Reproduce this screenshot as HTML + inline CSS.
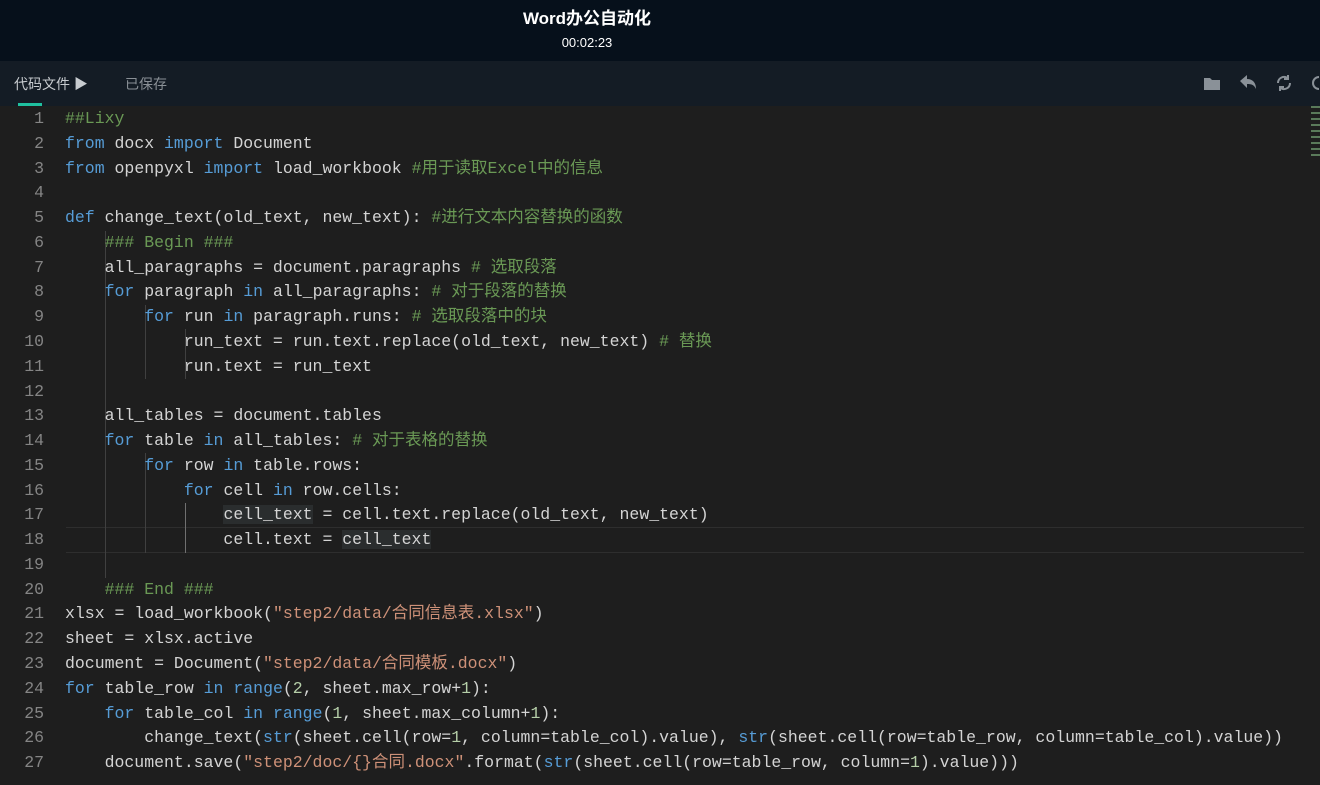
<!DOCTYPE html>
<html><head><meta charset="utf-8"><style>
*{margin:0;padding:0;box-sizing:border-box}
body{width:1320px;height:785px;overflow:hidden;background:#1e1e1e;font-family:"Liberation Sans","Noto Sans CJK SC",sans-serif}
#hdr{position:absolute;left:0;top:0;width:1320px;height:61px;background:#06101b;color:#fff;text-align:center}
#hdr .t{position:absolute;left:0;width:1174px;top:8px;font-size:17px;font-weight:bold;line-height:22px}
#hdr .tm{position:absolute;left:0;width:1174px;top:35px;font-size:13px;line-height:16px}
#tb{position:absolute;left:0;top:61px;width:1320px;height:45px;background:#141c25;font-size:14px;line-height:20px}
#tb .a{position:absolute;left:14px;top:13px;color:#c8ccd0}
#tb .b{position:absolute;left:125px;top:13px;color:#8a9096}
#tb .u{position:absolute;left:18px;top:42px;width:24px;height:3px;background:#1fc0a0}
#ed{position:absolute;left:0;top:106px;width:1320px;height:679px;background:#1e1e1e}
#lines{position:absolute;left:0;top:1px}
.ln{position:absolute;left:0;width:44px;height:24px;line-height:24px;text-align:right;color:#858585;font:16.5px/24px "Liberation Mono",monospace}
.cd{position:absolute;left:65px;height:24px;white-space:pre;color:#d4d4d4;font:16.5px/24px "Liberation Mono","Noto Sans CJK SC",monospace}
.k{color:#569cd6}.c{color:#6a9955}.s{color:#ce9178}.n{color:#b5cea8}
.g{position:absolute;width:1px;background:#404040}
.hl{background:#2a2d2e}
</style></head><body>
<div id="hdr"><div class="t">Word办公自动化</div><div class="tm">00:02:23</div></div>
<div id="tb"><span class="a">代码文件 ▶</span><span class="b">已保存</span><div class="u"></div>
<svg style="position:absolute;left:1203px;top:14px" width="18" height="16"><path d="M1 3h6l2 2h8v10H1z" fill="#8a9198"/></svg>
<svg style="position:absolute;left:1239px;top:13px" width="18" height="16"><path d="M1 7l7-6v4c6 0 9 4 9 10c-2-4-4-5-9-5v4z" fill="#8a9198"/></svg>
<svg style="position:absolute;left:1275px;top:13px" width="18" height="18" fill="none" stroke="#8a9198" stroke-width="2"><path d="M3 9a6 6 0 0 1 10-4.5M15 9a6 6 0 0 1-10 4.5"/><path d="M13 1v4h-4M5 17v-4h4"/></svg>
<svg style="position:absolute;left:1310px;top:13px" width="10" height="18" fill="none" stroke="#8a9198" stroke-width="2"><path d="M9 3a6 6 0 0 0 0 12"/></svg>
</div>
<div id="ed">
<div style="position:absolute;left:66px;top:421px;width:1238px;height:26px;border-top:1px solid #2e2e2e;border-bottom:1px solid #2e2e2e"></div>
<div class="g" style="left:105px;top:125px;height:347px"></div>
<div class="g" style="left:145px;top:199px;height:74px"></div>
<div class="g" style="left:145px;top:347px;height:100px"></div>
<div class="g" style="left:185px;top:223px;height:50px"></div>
<div class="g" style="left:185px;top:397px;height:50px;background:#707070"></div>
<div id="lines"></div>
<div style="position:absolute;left:1311px;top:0;width:9px;height:50px;background:repeating-linear-gradient(#5a7a5a 0 2px,transparent 2px 6px)"></div>
</div>
<script>
const L=[
'<span class="c">##Lixy</span>',
'<span class="k">from</span> docx <span class="k">import</span> Document',
'<span class="k">from</span> openpyxl <span class="k">import</span> load_workbook <span class="c">#用于读取Excel中的信息</span>',
'',
'<span class="k">def</span> change_text(old_text, new_text): <span class="c">#进行文本内容替换的函数</span>',
'    <span class="c">### Begin ###</span>',
'    all_paragraphs = document.paragraphs <span class="c"># 选取段落</span>',
'    <span class="k">for</span> paragraph <span class="k">in</span> all_paragraphs: <span class="c"># 对于段落的替换</span>',
'        <span class="k">for</span> run <span class="k">in</span> paragraph.runs: <span class="c"># 选取段落中的块</span>',
'            run_text = run.text.replace(old_text, new_text) <span class="c"># 替换</span>',
'            run.text = run_text',
'',
'    all_tables = document.tables',
'    <span class="k">for</span> table <span class="k">in</span> all_tables: <span class="c"># 对于表格的替换</span>',
'        <span class="k">for</span> row <span class="k">in</span> table.rows:',
'            <span class="k">for</span> cell <span class="k">in</span> row.cells:',
'                <span class="hl">cell_text</span> = cell.text.replace(old_text, new_text)',
'                cell.text = <span class="hl">cell_text</span>',
'',
'    <span class="c">### End ###</span>',
'xlsx = load_workbook(<span class="s">"step2/data/合同信息表.xlsx"</span>)',
'sheet = xlsx.active',
'document = Document(<span class="s">"step2/data/合同模板.docx"</span>)',
'<span class="k">for</span> table_row <span class="k">in</span> <span class="k">range</span>(<span class="n">2</span>, sheet.max_row+<span class="n">1</span>):',
'    <span class="k">for</span> table_col <span class="k">in</span> <span class="k">range</span>(<span class="n">1</span>, sheet.max_column+<span class="n">1</span>):',
'        change_text(<span class="k">str</span>(sheet.cell(row=<span class="n">1</span>, column=table_col).value), <span class="k">str</span>(sheet.cell(row=table_row, column=table_col).value))',
'    document.save(<span class="s">"step2/doc/{}合同.docx"</span>.format(<span class="k">str</span>(sheet.cell(row=table_row, column=<span class="n">1</span>).value)))'];
let h='';L.forEach((t,i)=>{const y=(i*24.77).toFixed(1);h+=`<div class="ln" style="top:${y}px">${i+1}</div><div class="cd" style="top:${y}px">${t}</div>`});
document.getElementById('lines').innerHTML=h;
</script>
</body></html>
